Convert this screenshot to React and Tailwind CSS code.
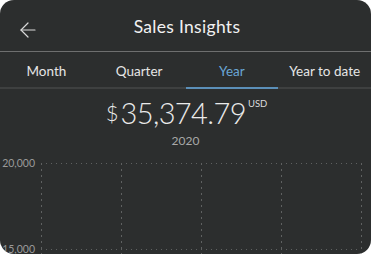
import { ArrowLeft } from "lucide-react";

const tabs = ["Month", "Quarter", "Year", "Year to date"];

const App = () => {
  return (
    <div className="w-[371px] h-[254px] bg-white overflow-hidden">
      <div
        className="w-full h-full bg-[#2c2e2e] rounded-[14px] flex flex-col overflow-hidden text-white"
        style={{ fontFamily: "Lato, 'Noto Sans', sans-serif" }}
      >
        {/* Header */}
        <div className="h-[52px] shrink-0 flex items-center relative border-b border-[#6e6f6f]">
          <div className="absolute left-[16px] top-[18px] text-[#d9d9d9]">
            <ArrowLeft size={24} strokeWidth={1.2} />
          </div>
          <div className="flex-1 text-center text-[17.5px] tracking-[0.3px] text-[#f2f2f2] pl-[3px] pt-[4px]">
            Sales Insights
          </div>
        </div>

        {/* Tabs */}
        <div className="h-[37px] shrink-0 grid grid-cols-4 border-b-2 border-[#3e4040]">
          {tabs.map((t, i) => (
            <div
              key={t}
              className={
                "flex items-center justify-center text-[13.5px] -mb-[2px] border-b-2 pt-[3px] " +
                (i === 2
                  ? "text-[#6aa6d6] border-[#5b8fb8]"
                  : "text-[#e6e6e6] border-transparent")
              }
            >
              {t}
            </div>
          ))}
        </div>

        {/* Amount */}
        <div className="flex flex-col items-center pt-[9px]">
          <div className="flex items-start leading-none pl-[2px]">
            <span className="text-[22px] font-light text-[#eaeaea] mt-[4px] mr-[2px]">$</span>
            <span className="text-[29px] font-light text-[#eaeaea] tracking-[-0.6px]">35,374.79</span>
            <span className="text-[9.5px] text-[#dcdcdc] ml-[2px] mt-[1px]">USD</span>
          </div>
          <div className="text-[12px] text-[#a8a8a8] mt-[5px]">2020</div>
        </div>

        {/* Chart */}
        <div className="flex mt-[13px] shrink-0">
          <div className="w-[38px] h-[100px] -mt-[7px] flex flex-col justify-between text-[10.5px] leading-[14px] text-[#9a9a9a] items-end pr-[3px]">
            <span>20,000</span>
            <span>15,000</span>
          </div>
          <svg width="330" height="100" className="shrink-0">
            <line x1="3" y1="0.5" x2="323" y2="0.5" stroke="#5f6161" strokeWidth="1" strokeDasharray="1 4" />
            <line x1="3" y1="86.5" x2="323" y2="86.5" stroke="#5f6161" strokeWidth="1" strokeDasharray="1 4" />
            {[3, 83, 163, 243, 323].map((x) => (
              <line key={x} x1={x + 0.5} y1="0" x2={x + 0.5} y2="100" stroke="#5f6161" strokeWidth="1" strokeDasharray="2 4" />
            ))}
          </svg>
        </div>
      </div>
    </div>
  );
};

export default App;
